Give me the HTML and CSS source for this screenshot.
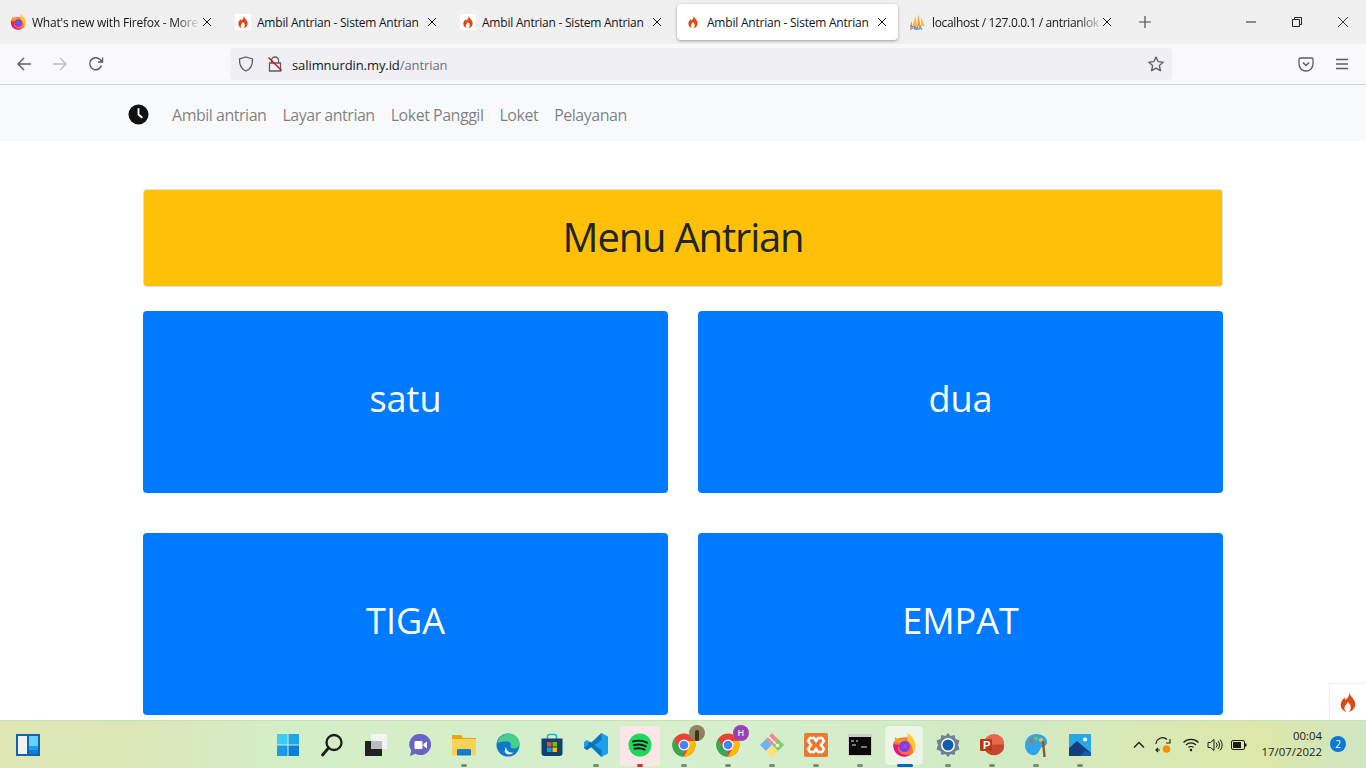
FILE: index.html
```html
<!DOCTYPE html>
<html lang="id">
<head>
  <meta charset="UTF-8">
  <title>Ambil Antrian - Sistem Antrian</title>
  <link rel="stylesheet" href="styles.css">
</head>
<body>
  <svg class="defs" width="0" height="0">
    <symbol id="flame" viewBox="0 0 24 24">
      <path fill="#dd4814" d="M13 1c1 4-1 6-3 8-1 1-1.500 0-1.500-2C6 9 4 12 4 15c0 4 3 7 6.500 8-2-1.500-3-3.500-2-6 .7-1.800 2.500-2.500 3-5 2 1.500 4 3.500 3.500 6.500-.3 1.800-1 3-2.500 4.500 4-1 7.500-4 7.500-8.500C20 9 15 7 13 1z"/>
    </symbol>
    <symbol id="firefox" viewBox="0 0 24 24">
      <path fill="#ff7139" d="M1.500 9C.5 14 2 19 6 21.500c4.500 3 10.500 2.500 14.500-1 3-3 3.500-8 2-12L17 4 7 5z"/>
      <path fill="#ffca3a" d="M15 0c5 2.500 8.500 7 8.500 12.500 0 3-1 5.500-2.500 7.500 0-6-2-10-6.500-13.500 1.500-2 1.500-4.500.5-6.500z"/>
      <path fill="#e31587" d="M1.500 11c-.5 5 1.500 9 5 11 4 2.500 9 2 12-.5-4 1-8.500.5-11-2.500-2-2.500-2-5 0-7z"/>
      <path fill="#ff980e" d="M3 4c2 2.500 5 2 8 2 1 0 2 .5 2.500 1.500L9 11 4.500 9.500C3 8 2.500 6 3 4z"/>
      <circle cx="12.500" cy="13.500" r="5.500" fill="#7542e5"/>
      <circle cx="13" cy="13.500" r="2.500" fill="#a93fdd"/>
    </symbol>
    <symbol id="close" viewBox="0 0 10 10">
      <path d="M1 1l8 8M9 1l-8 8" fill="none" stroke="currentColor" stroke-width="1"/>
    </symbol>
  </svg>

  <div class="tabstrip">
    <div class="tab">
      <svg class="favicon" viewBox="0 0 24 24"><use href="#firefox"/></svg>
      <span class="tab-title fade">What's new with Firefox - More</span>
      <svg class="tab-close"><use href="#close"/></svg>
    </div>
    <div class="tab">
      <span class="favicon white"><svg class="flame-sm"><use href="#flame"/></svg></span>
      <span class="tab-title">Ambil Antrian - Sistem Antrian</span>
      <svg class="tab-close"><use href="#close"/></svg>
    </div>
    <div class="tab">
      <span class="favicon white"><svg class="flame-sm"><use href="#flame"/></svg></span>
      <span class="tab-title">Ambil Antrian - Sistem Antrian</span>
      <svg class="tab-close"><use href="#close"/></svg>
    </div>
    <div class="tab active">
      <span class="favicon white"><svg class="flame-sm"><use href="#flame"/></svg></span>
      <span class="tab-title">Ambil Antrian - Sistem Antrian</span>
      <svg class="tab-close"><use href="#close"/></svg>
    </div>
    <div class="tab">
      <svg class="favicon" viewBox="0 0 16 16">
        <path fill="#f89c0e" d="M8 0l2.500 12H7.500z"/>
        <path fill="#f9b640" d="M5.500 2L2.500 12H7zM11 3l3.500 9H11z"/>
        <path fill="#e98a0a" d="M2 7L0 12h2z"/>
        <text x="0" y="16" class="pma-letters">PMA</text>
      </svg>
      <span class="tab-title fade wide">localhost / 127.0.0.1 / antrianlok</span>
      <svg class="tab-close"><use href="#close"/></svg>
    </div>
    <svg class="new-tab" viewBox="0 0 12 12"><path d="M6 0v12M0 6h12" stroke="#4a4a4f" stroke-width="1.200"/></svg>
    <div class="win-controls">
      <svg viewBox="0 0 10 10"><path d="M0 5h10" stroke="#222" stroke-width="1"/></svg>
      <svg viewBox="0 0 10 10"><path d="M.5 2.500h7v7h-7zM2.500 2.500v-2h7v7h-2" fill="none" stroke="#222" stroke-width="1"/></svg>
      <svg viewBox="0 0 10 10"><path d="M0 0l10 10M10 0L0 10" stroke="#222" stroke-width=".9"/></svg>
    </div>
  </div>

  <div class="toolbar">
    <div class="nav-btns">
      <svg viewBox="0 0 16 16"><path d="M15 8H2M8 2L2 8l6 6" fill="none" stroke="#5b5b66" stroke-width="1.400"/></svg>
      <svg viewBox="0 0 16 16"><path d="M1 8h13M8 2l6 6-6 6" fill="none" stroke="#bdbdc4" stroke-width="1.400"/></svg>
      <svg viewBox="0 0 16 16"><path d="M13.500 9.500A6 6 0 1 1 12 3.500L14.500 6M14.500 1.500V6H10" fill="none" stroke="#5b5b66" stroke-width="1.400"/></svg>
    </div>
    <div class="urlbar">
      <svg class="url-icon" viewBox="0 0 16 16"><path d="M8 1l6.500 2c.3 6-1.500 10-6.500 12C3 13 1.200 9 1.500 3z" fill="none" stroke="#5b5b66" stroke-width="1.300"/></svg>
      <svg class="url-icon" viewBox="0 0 16 16">
        <path d="M4.500 7V4.500a3.500 3.500 0 0 1 7 0V7M2.500 7h11v8h-11z" fill="none" stroke="#5b5b66" stroke-width="1.300"/>
        <path d="M1.500 1.500l13 13" stroke="#d70022" stroke-width="1.200"/>
      </svg>
      <span class="url-text">salimnurdin.my.id<span class="url-path">/antrian</span></span>
      <svg class="url-star" viewBox="0 0 16 16"><path d="M8 1l2.100 4.600 5 .6-3.700 3.400 1 5L8 12.100l-4.400 2.500 1-5L.9 6.200l5-.6z" fill="none" stroke="#5b5b66" stroke-width="1.300" stroke-linejoin="round"/></svg>
    </div>
    <div class="tool-right">
      <svg viewBox="0 0 16 16"><path d="M2.500 2h11A1.500 1.500 0 0 1 15 3.500V8A7 7 0 0 1 1 8V3.500A1.500 1.500 0 0 1 2.500 2z" fill="none" stroke="#5b5b66" stroke-width="1.300"/><path d="M5 6.500L8 9.500l3-3" fill="none" stroke="#5b5b66" stroke-width="1.500"/></svg>
      <svg viewBox="0 0 16 16"><path d="M2 3.500h12M2 8h12M2 12.500h12" stroke="#5b5b66" stroke-width="1.300"/></svg>
    </div>
  </div>

  <div class="viewport">
    <nav class="navbar">
      <svg class="brand" viewBox="0 0 22 22">
        <circle cx="11" cy="11" r="10.500" fill="#111"/>
        <path d="M11 4.500V11l4 3.500" fill="none" stroke="#fff" stroke-width="2"/>
      </svg>
      <a href="#" class="nav-link">Ambil antrian</a>
      <a href="#" class="nav-link">Layar antrian</a>
      <a href="#" class="nav-link">Loket Panggil</a>
      <a href="#" class="nav-link">Loket</a>
      <a href="#" class="nav-link">Pelayanan</a>
    </nav>

    <main class="content">
      <h1 class="menu-title">Menu Antrian</h1>
      <div class="loket-grid">
        <a href="#" class="loket-btn">satu</a>
        <a href="#" class="loket-btn">dua</a>
        <a href="#" class="loket-btn">TIGA</a>
        <a href="#" class="loket-btn">EMPAT</a>
      </div>
    </main>

    <div class="debug-toggle"><svg class="flame-lg"><use href="#flame"/></svg></div>
  </div>

  <footer class="taskbar">
    <svg class="widgets" viewBox="0 0 24 22">
      <rect width="24" height="22" fill="#0f66ac"/>
      <rect x="2" y="2" width="9" height="18" fill="#f2f2f2"/>
      <rect x="13" y="2" width="9" height="10" fill="#63d4ff"/>
      <rect x="13" y="12" width="9" height="4" fill="#1ba0f0"/>
      <rect x="13" y="16" width="9" height="4" fill="#0a80dc"/>
    </svg>

    <div class="task-icons">
      <div class="task-item">
        <svg viewBox="0 0 24 24">
          <rect x="1" y="1" width="10.500" height="10.500" fill="#3ccbf4"/>
          <rect x="12.500" y="1" width="10.500" height="10.500" fill="#1da6ec"/>
          <rect x="1" y="12.500" width="10.500" height="10.500" fill="#1a9ae6"/>
          <rect x="12.500" y="12.500" width="10.500" height="10.500" fill="#0f7fd6"/>
        </svg>
      </div>
      <div class="task-item">
        <svg viewBox="0 0 24 24"><circle cx="14" cy="9.500" r="7.500" fill="none" stroke="#1d1d1d" stroke-width="2.300"/><path d="M8.500 15L2.500 22" stroke="#1d1d1d" stroke-width="2.800" stroke-linecap="round"/></svg>
      </div>
      <div class="task-item">
        <svg viewBox="0 0 24 24">
          <rect x="7" y="1" width="16" height="15" fill="#f4f4f4"/>
          <rect x="1" y="8" width="17" height="15" fill="#222"/>
          <rect x="7" y="8" width="11" height="8" fill="#bbb"/>
        </svg>
      </div>
      <div class="task-item">
        <svg viewBox="0 0 24 24">
          <path d="M12.500 1a10.500 10.500 0 1 1-5 19.700L2 23l1.200-5.500A10.500 10.500 0 0 1 12.500 1z" fill="#6a63c6"/>
          <rect x="6.500" y="8" width="8" height="8" rx="1" fill="#fff"/>
          <path d="M15.500 11l3.500-2.500v7L15.500 13z" fill="#fff"/>
        </svg>
      </div>
      <div class="task-item has-pill">
        <svg viewBox="0 0 24 24">
          <path d="M0 2h9l2 3h13v17H0z" fill="#e9a90e"/>
          <rect y="6" width="24" height="16.500" fill="#fcd354"/>
          <rect x="5" y="16" width="14" height="6.500" rx="1" fill="#0f7dcb"/>
        </svg>
      </div>
      <div class="task-item">
        <svg viewBox="0 0 24 24">
          <circle cx="12" cy="12" r="11.500" fill="#0f78c8"/>
          <path d="M1 10C3 3 9 .5 13 .5c6 0 10.500 4.500 10.500 10 0 3-2 5-5.500 5-2.500 0-3.500-1-3.500-2 1.500-3-1-5-3.500-5C7 8.500 3 9 1 10z" fill="#45cf8d"/>
          <path d="M10 14c0 4 4 6.500 8 5.500-3 2.500-7 2.500-8.500.5-1-1.500-1-4 .5-6z" fill="#e5f4fb"/>
        </svg>
      </div>
      <div class="task-item">
        <svg viewBox="0 0 24 24">
          <path d="M7.500 6V3.500a2 2 0 0 1 2-2h5a2 2 0 0 1 2 2V6" fill="none" stroke="#18b4d8" stroke-width="1.500"/>
          <path d="M1.500 5.500h21V20a3 3 0 0 1-3 3h-15a3 3 0 0 1-3-3z" fill="#12406f"/>
          <rect x="7" y="9" width="4.500" height="4.500" fill="#f25022"/>
          <rect x="12.500" y="9" width="4.500" height="4.500" fill="#7fba00"/>
          <rect x="7" y="14.500" width="4.500" height="4.500" fill="#00a4ef"/>
          <rect x="12.500" y="14.500" width="4.500" height="4.500" fill="#ffb900"/>
        </svg>
      </div>
      <div class="task-item has-pill">
        <svg viewBox="0 0 24 24">
          <path d="M17.500 0L24 3.500v17L17.500 24 7 14l-4 3-3-2V9l3-2 4 3z" fill="#1ba1ec"/>
          <path d="M17.500 0v7L10.500 12l7 5v7L3.500 10.500 6.500 8.300 7 10z" fill="#0f75bf"/>
          <path d="M0 15l3 2 7-5-3-2.500z" fill="#0f6cb5"/>
        </svg>
      </div>
      <div class="task-item spotify has-pill">
        <svg viewBox="0 0 24 24">
          <circle cx="12" cy="12" r="11.500" fill="#1ed760"/>
          <path d="M5 8.500c4.500-1.300 10-1 14 1.200M5.800 12.200c3.800-1 8.500-.8 12 1.200M6.600 15.700c3.200-.8 7-.6 10 1" fill="none" stroke="#191414" stroke-width="1.900" stroke-linecap="round"/>
        </svg>
      </div>
      <div class="task-item has-pill">
        <svg viewBox="0 0 24 24" class="chrome">
          <circle cx="12" cy="12" r="11.500" fill="#ea4335"/>
          <path d="M12 23.500A11.500 11.500 0 0 1 2 6l5 8.500 5 1z" fill="#34a853"/>
          <path d="M23.500 12A11.500 11.500 0 0 1 12 23.500L17 14l-2-6h7.500c.7 1.200 1 2.500 1 4z" fill="#fbbc05"/>
          <circle cx="12" cy="12" r="5.500" fill="#fff"/>
          <circle cx="12" cy="12" r="4.300" fill="#4285f4"/>
        </svg>
        <span class="avatar photo"><span class="photo-figure"></span></span>
      </div>
      <div class="task-item has-pill">
        <svg viewBox="0 0 24 24" class="chrome">
          <circle cx="12" cy="12" r="11.500" fill="#ea4335"/>
          <path d="M12 23.500A11.500 11.500 0 0 1 2 6l5 8.500 5 1z" fill="#34a853"/>
          <path d="M23.500 12A11.500 11.500 0 0 1 12 23.500L17 14l-2-6h7.500c.7 1.200 1 2.500 1 4z" fill="#fbbc05"/>
          <circle cx="12" cy="12" r="5.500" fill="#fff"/>
          <circle cx="12" cy="12" r="4.300" fill="#4285f4"/>
        </svg>
        <span class="avatar">H</span>
      </div>
      <div class="task-item has-pill">
        <svg viewBox="0 0 24 24">
          <path d="M0 12l6-6 6 6-6 6z" fill="#6db1f0"/>
          <path d="M12 12l6-6 6 6-6 6z" fill="#85c96b"/>
          <path d="M6 18l6-6 6 6-6 6z" fill="#ffe07a"/>
          <path d="M6 6l6-6 6 6-6 6z" fill="#f28a8a"/>
          <path d="M8 3l8 8" stroke="#fff" stroke-width="1.500"/>
          <circle cx="17.500" cy="12.500" r="1.800" fill="#fff"/>
        </svg>
      </div>
      <div class="task-item has-pill">
        <svg viewBox="0 0 24 24">
          <rect width="24" height="24" rx="2" fill="#ea7a33"/>
          <path d="M6 5h4l2 3 2-3h4l2 3-3 4 3 4-2 3h-4l-2-3-2 3H6l-2-3 3-4-3-4z" fill="none" stroke="#fff" stroke-width="2.400"/>
        </svg>
      </div>
      <div class="task-item has-pill">
        <svg viewBox="0 0 24 24">
          <rect y="1" width="24" height="22" fill="#c8cdd0"/>
          <rect x="1" y="4" width="22" height="18" fill="#0a0a0a"/>
          <path d="M3 8h3M8 8h2M4 12h4M13 14h6" stroke="#e6e6e6" stroke-width="1.200"/>
        </svg>
      </div>
      <div class="task-item firefox-item has-pill">
        <svg viewBox="0 0 24 24"><use href="#firefox"/></svg>
      </div>
      <div class="task-item has-pill">
        <svg viewBox="0 0 24 24">
          <path d="M12 0l2.500 3 4-1 1 4 4 1.500-1.500 4.500 1.500 4.500-4 1.500-1 4-4-1L12 24l-2.500-3-4 1-1-4-4-1.500L2 12 .5 7.500l4-1.500 1-4 4 1z" fill="#6f7f8f"/>
          <circle cx="12" cy="12" r="7" fill="#fff"/>
          <circle cx="12" cy="12" r="5.500" fill="#0f5fa8"/>
        </svg>
      </div>
      <div class="task-item has-pill">
        <svg viewBox="0 0 24 24">
          <circle cx="14" cy="11.500" r="10.500" fill="#e8664a"/>
          <path d="M14 11.500h10.500A10.500 10.500 0 0 1 4 15z" fill="#c8472c"/>
          <rect x="0" y="6" width="12" height="12" rx="1" fill="#bc3618"/>
          <text x="3" y="16" class="ppt-letter">P</text>
        </svg>
      </div>
      <div class="task-item has-pill">
        <svg viewBox="0 0 24 24">
          <path d="M12 1c6 0 11 3 11 8 0 4-3 4-5 5-2 1-3 7-7 8C5 23 1 18 1 12 1 6 6 1 12 1z" fill="#2ea6e8"/>
          <circle cx="7" cy="8" r="2" fill="#e85d3f"/>
          <circle cx="12" cy="5.500" r="2" fill="#7ec24a"/>
          <circle cx="17" cy="7" r="2" fill="#f2c230"/>
          <path d="M19 8l1.500 16" stroke="#8b5a2b" stroke-width="2.400"/>
        </svg>
      </div>
      <div class="task-item has-pill">
        <svg viewBox="0 0 24 24">
          <rect width="22" height="22" x="1" y="1" fill="#2aa7e9"/>
          <path d="M1 23v-8l8-7 14 12v3z" fill="#123f7d"/>
          <path d="M12 23l5-5 6 2v3z" fill="#1a5ea8"/>
          <circle cx="17" cy="6.500" r="2" fill="#fff"/>
        </svg>
      </div>
    </div>

    <div class="tray">
      <svg class="tray-chev" viewBox="0 0 12 8"><path d="M1 6.500L6 1.500l5 5" fill="none" stroke="#1a1a1a" stroke-width="1.300"/></svg>
      <svg class="tray-sync" viewBox="0 0 18 18">
        <path d="M2 8a6.500 6.500 0 0 1 11-4.500M16 3v4h-4M4 16l-2-2 2-2M2 14h4" fill="none" stroke="#1a1a1a" stroke-width="1.100"/>
        <circle cx="12.500" cy="13" r="3.800" fill="#f79009"/>
      </svg>
      <svg class="tray-wifi" viewBox="0 0 16 14"><path d="M.5 4.500a10.500 10.500 0 0 1 15 0M3 7a7 7 0 0 1 10 0M5.500 9.500a3.500 3.500 0 0 1 5 0" fill="none" stroke="#1a1a1a" stroke-width="1.100"/><circle cx="8" cy="12" r="1.200" fill="#1a1a1a"/></svg>
      <svg class="tray-vol" viewBox="0 0 16 14"><path d="M1 4.500h2.500L7 1.500v11L3.500 9.500H1z" fill="none" stroke="#1a1a1a" stroke-width="1"/><path d="M9 4.500a3.500 3.500 0 0 1 0 5M11 3a6 6 0 0 1 0 8M13 1.500a8 8 0 0 1 0 11" fill="none" stroke="#1a1a1a" stroke-width="1"/></svg>
      <svg class="tray-batt" viewBox="0 0 16 10"><rect x=".5" y=".5" width="13" height="9" rx="1.500" fill="none" stroke="#1a1a1a"/><rect x="2" y="2" width="8" height="6" fill="#1a1a1a"/><rect x="14" y="3.500" width="1.500" height="3" fill="#1a1a1a"/></svg>
      <div class="clock">
        <span>00:04</span>
        <span>17/07/2022</span>
      </div>
      <span class="notif">2</span>
    </div>
  </footer>
</body>
</html>
```

FILE: styles.css
```css
* { box-sizing: border-box; }
html, body { margin: 0; height: 768px; overflow: hidden; }
body { font-family: "Open Sans", "Noto Sans", Arial, sans-serif; background: #fff; display: flex; flex-direction: column; color: #212529; }
a { text-decoration: none; }
.defs { position: absolute; }

/* browser tabs */
.tabstrip { height: 44px; flex: none; background: #f0f0f0; display: flex; align-items: center; padding-left: 2px; gap: 4px; }
.tab { width: 221px; height: 36px; flex: none; display: flex; align-items: center; padding: 0 8px; position: relative; border-radius: 4px; }
.tab.active { background: #fff; box-shadow: 0 1px 3px rgba(0, 0, 0, 0.35); }
.favicon { width: 16px; height: 16px; flex: none; }
.favicon.white { background: #fff; display: flex; align-items: center; justify-content: center; }
.flame-sm { width: 14px; height: 14px; }
.tab-title { margin-left: 6px; padding-top: 2px; font-size: 12px; line-height: 16px; white-space: nowrap; overflow: hidden; color: #15141a; width: 168px; letter-spacing: -0.22px; }
.tab-title.wide { width: 172px; letter-spacing: -0.36px; }
.fade { -webkit-mask-image: linear-gradient(to right, #000 85%, transparent 100%); mask-image: linear-gradient(to right, #000 85%, transparent 100%); }
.tab-close { width: 10px; height: 10px; position: absolute; left: 200px; top: 13px; color: #15141a; }
.pma-letters { font-family: "Liberation Sans", sans-serif; font-size: 5.500px; font-weight: 700; fill: #5a67a5; }
.new-tab { width: 12px; height: 12px; margin-left: 12px; }
.win-controls { margin-left: auto; display: flex; gap: 36px; padding-right: 18px; }
.win-controls svg { width: 10px; height: 10px; }

/* url toolbar */
.toolbar { height: 41px; flex: none; background: #f9f9fb; border-bottom: 1px solid #cfcfd8; display: flex; align-items: center; padding-bottom: 1px; }
.nav-btns { display: flex; gap: 20px; padding-left: 16px; width: 230px; }
.nav-btns svg { width: 16px; height: 16px; }
.urlbar { width: 942px; height: 32px; background: #f0f0f4; border-radius: 4px; display: flex; align-items: center; padding: 0 8px; }
.url-icon { width: 16px; height: 16px; margin-right: 13px; }
.url-icon + .url-icon { margin-right: 9px; margin-left: 0; }
.url-text { font-size: 13px; padding-top: 2px; color: #15141a; letter-spacing: -0.08px; }
.url-path { color: #6f6f78; }
.url-star { width: 16px; height: 16px; margin-left: auto; }
.tool-right { display: flex; gap: 20px; padding-left: 126px; }
.tool-right svg { width: 16px; height: 16px; }

/* page */
.viewport { flex: 1; position: relative; overflow: hidden; min-height: 0; }
.navbar { height: 56px; background: #f8f9fa; display: flex; align-items: center; padding-left: 128px; }
.brand { width: 21px; height: 21px; margin: 2px 15px 0 0; }
.nav-link { color: rgba(0, 0, 0, 0.5); font-size: 16px; padding: 3px 8px 0; letter-spacing: -0.48px; }
.content { padding: 48px 143px 0; }
.menu-title { margin: 0 0 24px; height: 98px; background: #ffc107; background-clip: padding-box; border: 1px solid rgba(0, 0, 0, 0.125); border-radius: 4px; text-align: center; font-size: 40px; font-weight: 400; line-height: 94px; letter-spacing: -1.200px; color: #212529; }
.loket-grid { display: grid; grid-template-columns: 1fr 1fr; column-gap: 30px; row-gap: 40px; }
.loket-btn { height: 182px; background: #007bff; color: #fff; border-radius: 4px; text-align: center; font-size: 36px; line-height: 176px; }
.debug-toggle { position: absolute; right: 0; bottom: 0; width: 37px; height: 37px; background: #fff; border-left: 1px solid #eee; border-top: 1px solid #eee; display: flex; align-items: center; justify-content: center; }
.flame-lg { width: 22px; height: 22px; }

/* windows taskbar */
.taskbar { height: 48px; flex: none; position: relative; border-top: 1px solid #c9e2b5; display: flex; align-items: center; background: linear-gradient(90deg, #dfe6b4 0%, #dbe7b8 10%, #d4eec6 20%, #d6efcd 50%, #d2eac3 75%, #dde8a8 92%, #cfe6c2 100%); }
.widgets { width: 24px; height: 22px; margin-left: 16px; flex: none; }
.task-icons { display: flex; margin-left: 226px; }
.task-item { width: 44px; height: 44px; display: flex; align-items: center; justify-content: center; position: relative; }
.task-item > svg { width: 24px; height: 24px; }
.has-pill::after { content: ""; position: absolute; bottom: 0; left: 19px; width: 6px; height: 3px; border-radius: 2px; background: #7d8a7a; }
.spotify::before { content: ""; position: absolute; left: 2px; top: 3px; width: 40px; height: 40px; background: #fde6e6; border-radius: 4px; }
.spotify svg { position: relative; }
.spotify::after { background: #d92b2b; }
.firefox-item::before { content: ""; position: absolute; left: 3px; top: 3px; width: 38px; height: 39px; background: #ecf6e6; border-radius: 4px; box-shadow: 0 0 1px rgba(0, 0, 0, 0.2); }
.firefox-item svg { position: relative; }
.firefox-item::after { left: 15px; width: 16px; background: #0067c0; }
.avatar { position: absolute; right: 1px; top: 2px; width: 16px; height: 16px; border-radius: 50%; background: #9b3fb5; color: #eee; font-size: 9px; font-weight: 600; line-height: 16px; text-align: center; }
.avatar.photo { background: #8d8560; display: flex; justify-content: center; align-items: flex-end; overflow: hidden; }
.photo-figure { width: 4px; height: 11px; border-radius: 2px 2px 0 0; background: #3a3320; }
.ppt-letter { font-family: "Liberation Sans", sans-serif; font-size: 11px; font-weight: 700; fill: #fff; }
.tray { position: absolute; left: 1133px; top: 0; bottom: 0; right: 0; display: flex; align-items: center; }
.tray-chev { width: 12px; height: 8px; margin-right: 9px; }
.tray-sync { width: 18px; height: 18px; margin-right: 11px; }
.tray-wifi { width: 16px; height: 14px; margin-right: 8px; }
.tray-vol { width: 16px; height: 14px; margin-right: 8px; }
.tray-batt { width: 16px; height: 10px; }
.clock { position: absolute; right: 44px; top: 7px; display: flex; flex-direction: column; align-items: flex-end; font-size: 11.400px; line-height: 16px; color: #1a1a1a; }
.notif { position: absolute; right: 20px; top: 15px; width: 16px; height: 16px; border-radius: 50%; background: #0a78d7; color: #fff; font-size: 10px; line-height: 16px; text-align: center; }
```
